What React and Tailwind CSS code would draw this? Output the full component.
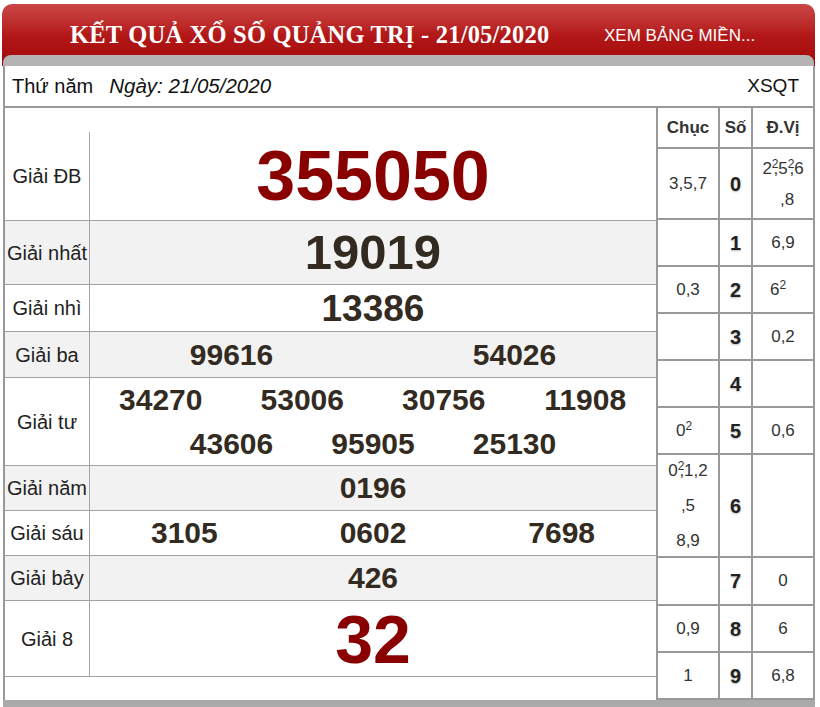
import React from "react";

const rows = [
  { label: "Giải ĐB", h: "h-[89px]", bg: "bg-white", nums: ["355050"], cls: "text-[70px] text-[#880000]", w: "w-full" },
  { label: "Giải nhất", h: "h-[64px]", bg: "bg-[#f2f2f2]", nums: ["19019"], cls: "text-[49px]", w: "w-full" },
  { label: "Giải nhì", h: "h-[47px]", bg: "bg-white", nums: ["13386"], cls: "text-[37px]", w: "w-full" },
  { label: "Giải ba", h: "h-[46px]", bg: "bg-[#f2f2f2]", nums: ["99616", "54026"], cls: "text-[30px]", w: "w-1/2" },
  { label: "Giải tư", h: "h-[88px]", bg: "bg-white", nums: ["34270", "53006", "30756", "11908", "43606", "95905", "25130"], cls: "text-[30px]", w: "w-1/4" },
  { label: "Giải năm", h: "h-[45px]", bg: "bg-[#f2f2f2]", nums: ["0196"], cls: "text-[30px]", w: "w-full" },
  { label: "Giải sáu", h: "h-[45px]", bg: "bg-white", nums: ["3105", "0602", "7698"], cls: "text-[30px]", w: "w-1/3" },
  { label: "Giải bảy", h: "h-[45px]", bg: "bg-[#f2f2f2]", nums: ["426"], cls: "text-[30px]", w: "w-full" },
  { label: "Giải 8", h: "h-[76px]", bg: "bg-white", nums: ["32"], cls: "text-[68px] text-[#880000]", w: "w-full" },
];

const Sup = ({ children, tight }) => (
  <sup className={"text-[12px] " + (tight ? "-mr-[5px]" : "")}>{children}</sup>
);

const loto = [
  { h: "h-[71px]", d: "0", c: "3,5,7", u: (
    <span className="leading-[31px] block">
      2<Sup tight>2</Sup>,5<Sup tight>2</Sup>,6<br />
      <span className="pl-[8px]">,8</span>
    </span>
  ) },
  { h: "h-[47px]", d: "1", c: "", u: "6,9" },
  { h: "h-[47px]", d: "2", c: "0,3", u: <span className="pr-[10px]">6<Sup>2</Sup></span> },
  { h: "h-[47px]", d: "3", c: "", u: "0,2" },
  { h: "h-[47px]", d: "4", c: "", u: "" },
  { h: "h-[47px]", d: "5", c: <span className="pr-[8px]">0<Sup>2</Sup></span>, u: "0,6" },
  { h: "h-[103px]", d: "6", c: (
    <span className="block leading-[35px]">
      0<Sup tight>2</Sup>,1,2<br />,5<br />8,9
    </span>
  ), u: "" },
  { h: "h-[48px]", d: "7", c: "", u: "0" },
  { h: "h-[47px]", d: "8", c: "0,9", u: "6" },
  { h: "h-[47px]", d: "9", c: "1", u: "6,8" },
];

export default function App() {
  return (
    <div className="w-[820px] h-[707px] overflow-hidden bg-white font-['Liberation_Sans',Arial,sans-serif] text-[#222]">
      {/* header */}
      <div className="pt-[4px] pl-[2px] pr-[5px]">
        <div className="h-[62px] rounded-t-[10px] bg-gradient-to-b from-[#cc4646] via-[#b31818] to-[#a30808] flex flex-col">
          <div className="h-[51px] flex items-center pt-[12px]">
            <div className="pl-[68px] w-[600px] font-['Liberation_Serif',serif] font-bold text-white text-[24.5px] whitespace-nowrap tracking-[0.2px]">
              KẾT QUẢ XỔ SỐ QUẢNG TRỊ - 21/05/2020
            </div>
            <div className="pl-[2px] text-white text-[17px] whitespace-nowrap">XEM BẢNG MIỀN...</div>
          </div>
          <div className="h-[11px] mx-[1px] rounded-t-[8px] bg-[#b4b4b4]" />
        </div>
      </div>

      {/* content */}
      <div className="ml-[3px] w-[812px] border-x-2 border-[#999]">
        <div className="h-[42px] border-b-2 border-[#999] flex items-center pl-[7px] pr-[14px] text-[20px] text-[#111]">
          <span>Thứ năm</span>
          <span className="italic ml-[16px] text-[20.5px]">Ngày: 21/05/2020</span>
          <span className="ml-auto text-[19px]">XSQT</span>
        </div>

        <div className="flex h-[592px]">
          {/* left table */}
          <div className="flex-1 flex flex-col">
            <div className="h-[24px]" />
            {rows.map((r) => (
              <div key={r.label} className={`${r.h} ${r.bg} flex border-b border-[#a3a3a3]`}>
                <div className="w-[85px] shrink-0 border-r border-[#a3a3a3] flex items-center justify-center text-[20px] whitespace-nowrap">
                  {r.label}
                </div>
                <div className="flex-1 flex flex-wrap justify-center content-center">
                  {r.nums.map((n, i) => (
                    <div key={i} className={`${r.w} text-center font-bold text-[#332b22] ${r.cls}`} style={{ lineHeight: r.nums.length > 4 ? "44px" : "1" }}>
                      {n}
                    </div>
                  ))}
                </div>
              </div>
            ))}
            <div className="flex-1" />
          </div>

          {/* right table */}
          <div className="w-[157px] border-l-2 border-[#999] flex flex-col text-[17px] text-[#333]">
            <div className="h-[41px] flex border-b-2 border-[#999] font-bold">
              <div className="w-[62px] border-r-2 border-[#999] flex items-center justify-center">Chục</div>
              <div className="w-[33px] border-r-2 border-[#999] flex items-center justify-center">Số</div>
              <div className="flex-1 flex items-center justify-center">Đ.Vị</div>
            </div>
            {loto.map((r) => (
              <div key={r.d} className={`${r.h} flex border-b-2 border-[#999]`}>
                <div className="w-[62px] border-r-2 border-[#999] flex items-center justify-center text-center">{r.c}</div>
                <div className="w-[33px] border-r-2 border-[#999] flex items-center justify-center font-bold text-[20px] text-[#222] [text-shadow:0_1px_2px_#bbb]">{r.d}</div>
                <div className="flex-1 flex items-center justify-center text-center">{r.u}</div>
              </div>
            ))}
          </div>
        </div>
      </div>
      <div className="ml-[3px] w-[812px] h-[7px] bg-[#aaaaaa]" />
    </div>
  );
}
